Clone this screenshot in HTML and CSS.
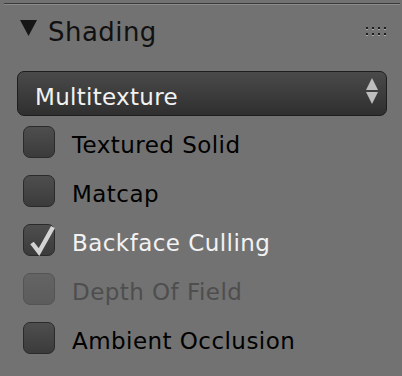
FILE: index.html
```html
<!DOCTYPE html>
<html>
<head>
    <title>Shading</title>
    <meta charset="utf-8">
    <link rel="stylesheet" href="styles.css">
</head>
<body>
    <div class="panel">
        <div class="rule"></div>

        <div class="header">
            <svg class="disclosure" width="17" height="17" viewBox="0 0 17 17">
                <polygon points="0,0 17,0 8.5,16" fill="#161616"/>
            </svg>
            <span class="title">Shading</span>
            <svg class="grip" width="24" height="10" viewBox="0 0 24 10">
                <g fill="#1e1e1e">
                    <rect x="1" y="0" width="2" height="2"/><rect x="7" y="0" width="2" height="2"/>
                    <rect x="13" y="0" width="2" height="2"/><rect x="19" y="0" width="2" height="2"/>
                    <rect x="1" y="6" width="2" height="2"/><rect x="7" y="6" width="2" height="2"/>
                    <rect x="13" y="6" width="2" height="2"/><rect x="19" y="6" width="2" height="2"/>
                </g>
                <g fill="#a8a8a8">
                    <rect x="1" y="2" width="2" height="1"/><rect x="7" y="2" width="2" height="1"/>
                    <rect x="13" y="2" width="2" height="1"/><rect x="19" y="2" width="2" height="1"/>
                    <rect x="1" y="8" width="2" height="1"/><rect x="7" y="8" width="2" height="1"/>
                    <rect x="13" y="8" width="2" height="1"/><rect x="19" y="8" width="2" height="1"/>
                </g>
            </svg>
        </div>

        <div class="menu">
            <span class="menu-label">Multitexture</span>
            <svg class="menu-arrows" width="12" height="26" viewBox="0 0 12 26">
                <polygon points="6,0 12,12 0,12" fill="#bdbdbd"/>
                <polygon points="0,14 12,14 6,26" fill="#bdbdbd"/>
            </svg>
        </div>

        <div class="options">
            <div class="option">
                <span class="box"></span>
                <span class="label">Textured Solid</span>
            </div>
            <div class="option">
                <span class="box"></span>
                <span class="label">Matcap</span>
            </div>
            <div class="option checked">
                <span class="box">
                    <svg class="tick" width="34" height="32" viewBox="0 0 34 32">
                        <polyline points="9,19 16,28 30,3" fill="none" stroke="#d4d4d4" stroke-width="4.4"/>
                    </svg>
                </span>
                <span class="label">Backface Culling</span>
            </div>
            <div class="option disabled">
                <span class="box"></span>
                <span class="label">Depth Of Field</span>
            </div>
            <div class="option">
                <span class="box"></span>
                <span class="label">Ambient Occlusion</span>
            </div>
        </div>
    </div>
</body>
</html>
```

FILE: styles.css
```css
body {
    margin: 0;
    padding: 0;
    background: #727272;
    font-family: "DejaVu Sans", "Liberation Sans", sans-serif;
    color: #000;
}
.panel {
    padding-top: 3px;
}
.rule {
    margin: 0 2px 0 4px;
    border-top: 1px solid #3a3a3a;
    border-bottom: 1px solid #8c8c8c;
}
.header {
    display: flex;
    align-items: flex-start;
    padding: 12px 0 0 20px;
    height: 30px;
}
.disclosure {
    margin-top: 3px;
}
.title {
    margin-left: 11px;
    font-size: 26px;
    line-height: 30px;
    letter-spacing: 0.45px;
    color: #111;
}
.grip {
    margin: 10px 13px 0 auto;
}
.menu {
    display: flex;
    align-items: flex-start;
    box-sizing: border-box;
    height: 45px;
    margin: 24px 15px 0 17px;
    padding: 12px 8px 4px 17px;
    border: 1px solid #1e1e1e;
    border-radius: 7px;
    background: linear-gradient(#4a4a4a, #2f2f2f);
}
.menu-label {
    flex: 1;
    font-size: 23px;
    line-height: 27px;
    letter-spacing: 0.3px;
    color: #f2f2f2;
}
.menu-arrows {
    margin-top: -6px;
}
.options {
    padding: 4px 0 0 23px;
}
.option {
    display: flex;
    align-items: flex-start;
    height: 49px;
}
.box {
    position: relative;
    box-sizing: border-box;
    width: 32px;
    height: 32px;
    margin-top: 6px;
    border: 1px solid #2a2a2a;
    border-radius: 7px;
    background: linear-gradient(#4e4e4e, #3b3b3b);
}
.tick {
    position: absolute;
    left: -1px;
    top: -1px;
    overflow: visible;
}
.label {
    margin: 12px 0 0 17px;
    font-size: 23px;
    line-height: 27px;
    letter-spacing: 0.45px;
}
.checked .label {
    color: #f2f2f2;
}
.disabled .box {
    border-color: #545454;
    background: linear-gradient(#646464, #5c5c5c);
}
.disabled .label {
    color: #4e4e4e;
}
```
